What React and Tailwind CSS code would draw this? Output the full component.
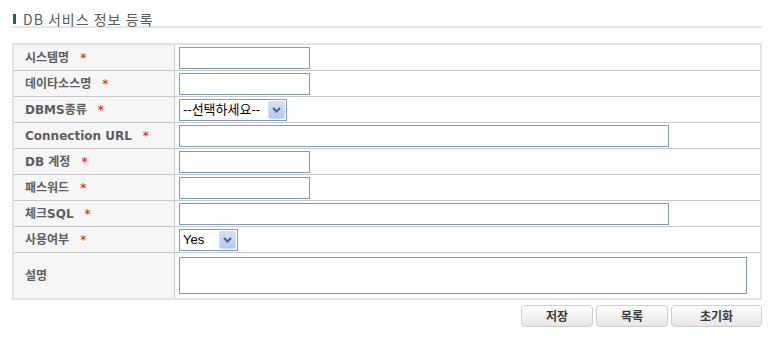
import { useState } from 'react'

const FONT = { fontFamily: '"Noto Sans CJK KR", "Liberation Sans", sans-serif' }
const LABEL_FONT = { fontFamily: '"DejaVu Sans", "Noto Sans CJK KR", sans-serif' }

const rows = [
  { label: '시스템명', type: 'short' },
  { label: '데이타소스명', type: 'short' },
  { label: 'DBMS종류', type: 'select', value: '--선택하세요--', width: 'w-[108px]' },
  { label: 'Connection URL', type: 'long' },
  { label: 'DB 계정', type: 'short' },
  { label: '패스워드', type: 'short' },
  { label: '체크SQL', type: 'long' },
  { label: '사용여부', type: 'select', value: 'Yes', width: 'w-[59px]' },
  { label: '설명', type: 'area', optional: true },
]

function FakeSelect({ value, width }) {
  return (
    <div className={`flex h-[22px] ${width} items-center border border-[#7f9db9] bg-white pl-[3px] pr-px`}>
      <span className="flex-1 text-[13px] leading-none text-black" style={{ fontFamily: '"Liberation Sans", "Noto Sans CJK KR", sans-serif' }}>{value}</span>
      <span className="flex h-[18px] w-[17px] items-center justify-center rounded-[2px] border border-[#d2defc] bg-gradient-to-b from-[#d4e0fd] to-[#b4c8f6]">
        <svg width="9" height="6" viewBox="0 0 9 6">
          <path d="M1 1 L4.5 4.5 L8 1" fill="none" stroke="#4d6185" strokeWidth="2" />
        </svg>
      </span>
    </div>
  )
}

function Field({ row }) {
  if (row.type === 'short') return <input className="h-[22px] w-[131px] border border-[#7f9db9] bg-white px-1 text-[12px] outline-none" />
  if (row.type === 'long') return <input className="h-[22px] w-[490px] border border-[#7f9db9] bg-white px-1 text-[12px] outline-none" />
  if (row.type === 'area') return <textarea className="h-[37px] w-[568px] resize-none border border-[#7f9db9] bg-white px-1 text-[12px] outline-none" />
  return <FakeSelect value={row.value} width={row.width} />
}

function App() {
  const [buttons] = useState([
    { text: '저장', w: 'w-[72px]' },
    { text: '목록', w: 'w-[72px]' },
    { text: '초기화', w: 'w-[91px]' },
  ])

  return (
    <div className="min-h-screen bg-white" style={FONT}>
      <div className="ml-[12px] w-[750px]">
        <div className="flex h-[28px] items-center gap-[7px] border-b-2 border-[#e6e6e6] pt-[12px] pl-px">
          <span className="h-[10px] w-[3px] bg-[#1c5a96]" />
          <h2 className="text-[14px] leading-none tracking-[1px] text-[#5a5a5a]">DB 서비스 정보 등록</h2>
        </div>

        <div className="mt-[15px] border-2 border-[#e3e3e3]">
          {rows.map((row, i) => (
            <div
              key={row.label}
              className={`flex ${row.type === 'area' ? 'h-[45px]' : 'h-[26px]'} ${i === 0 ? 'h-[25px]' : ''} ${i < rows.length - 1 ? 'border-b border-[#c8c8c8]' : ''}`}
            >
              <div
                className="flex w-[161px] shrink-0 items-center border-r border-[#c8c8c8] bg-[#f6f6f6] pl-[11px] text-[12px] font-bold text-[#5e5e5e]"
                style={LABEL_FONT}
              >
                {row.label}
                {!row.optional && <span className="ml-[11px] font-normal text-[#ff0000]">*</span>}
              </div>
              <div className="flex flex-1 items-center pl-[4px]">
                <Field row={row} />
              </div>
            </div>
          ))}
        </div>

        <div className="mt-[5px] flex justify-end gap-[3px]">
          {buttons.map((b) => (
            <button
              key={b.text}
              className={`${b.w} h-[22px] rounded-[4px] border border-[#cfcfcf] bg-gradient-to-b from-white to-[#e6e6e6] text-[12px] font-bold text-[#3a3a3a]`}
            >
              {b.text}
            </button>
          ))}
        </div>
      </div>
    </div>
  )
}

export default App
